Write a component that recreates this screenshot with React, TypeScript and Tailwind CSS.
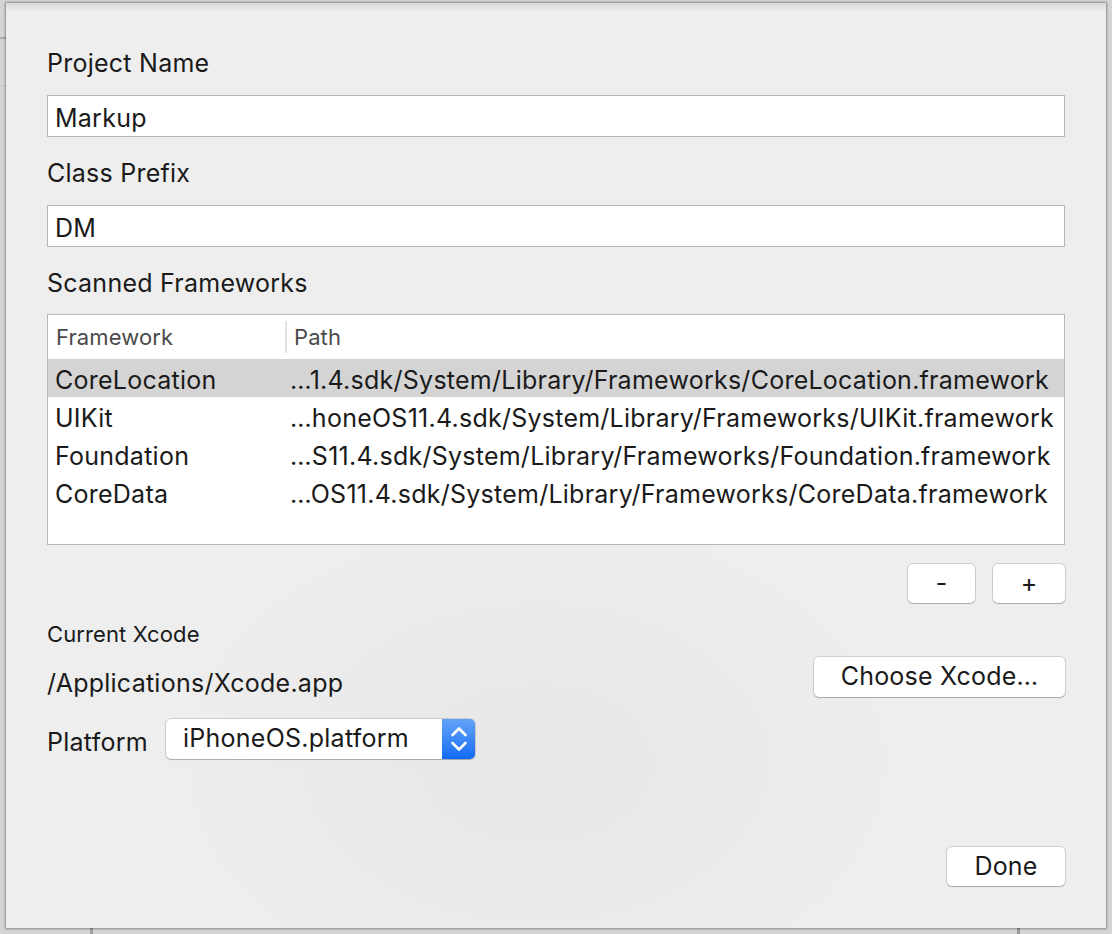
import React from 'react';

type Row = { name: string; path: string };

const rows: Row[] = [
  { name: 'CoreLocation', path: '…1.4.sdk/System/Library/Frameworks/CoreLocation.framework' },
  { name: 'UIKit', path: '…honeOS11.4.sdk/System/Library/Frameworks/UIKit.framework' },
  { name: 'Foundation', path: '…S11.4.sdk/System/Library/Frameworks/Foundation.framework' },
  { name: 'CoreData', path: '…OS11.4.sdk/System/Library/Frameworks/CoreData.framework' },
];

const font = { fontFamily: 'Inter, "Liberation Sans", sans-serif' };

function MacButton({ label, className }: { label: string; className: string }) {
  return (
    <button
      className={
        'bg-white rounded-[5px] text-[25px] tracking-[0.2px] text-[#1a1a1a] shadow-[0_0_0_1px_rgba(0,0,0,0.13),0_1px_1px_rgba(0,0,0,0.18)] flex items-center justify-center ' +
        className
      }
    >
      {label}
    </button>
  );
}

export default function App() {
  return (
    <div style={font} className="relative w-[1112px] h-[934px] bg-[#d5d5d5] overflow-hidden">
      {/* window chrome behind the sheet */}
      <div className="absolute left-0 top-[37px] w-[6px] h-[2px] bg-[#a9a9a9]" />
      <div className="absolute left-0 top-[85px] w-[6px] h-px bg-[#c4c4c4]" />
      <div className="absolute left-[90px] bottom-0 w-[3px] h-[8px] bg-[#9e9e9e]" />
      <div className="absolute left-[1017px] bottom-0 w-[3px] h-[8px] bg-[#9a9a9a]" />

      <div className="relative ml-[6px] mt-[3px] w-[1100px] h-[925px] bg-[#eeeeee] bg-[radial-gradient(ellipse_380px_260px_at_530px_760px,#e7e7e7,#eeeeee)] shadow-[0_0_2px_1px_rgba(0,0,0,0.35)] flex flex-col px-[41px] text-[#1a1a1a] tracking-[0.25px]">
        <div className="absolute left-0 top-0 w-full h-[9px] bg-gradient-to-b from-[#dadada] to-[#eeeeee]" />

        <div className="mt-[46px] text-[25px] leading-[28px]">Project Name</div>
        <div className="mt-[18px] h-[42px] bg-white border border-[#b6b6b6] flex items-center px-[7px] pt-[5px] text-[25px]">
          Markup
        </div>

        <div className="mt-[22px] text-[25px] leading-[28px]">Class Prefix</div>
        <div className="mt-[18px] h-[42px] bg-white border border-[#b6b6b6] flex items-center px-[7px] pt-[5px] text-[25px]">
          DM
        </div>

        <div className="mt-[22px] text-[25px] leading-[28px]">Scanned Frameworks</div>

        <div className="mt-[17px] h-[231px] bg-white border border-[#b9b9b9] flex flex-col">
          <div className="h-[44px] flex items-center text-[22px] text-[#4a4a4a] shrink-0 tracking-[0.1px]">
            <div className="w-[237px] pl-[8px]">Framework</div>
            <div className="w-[2px] h-[32px] bg-[#e3e3e3]" />
            <div className="pl-[7px]">Path</div>
          </div>
          {rows.map((r, i) => (
            <div
              key={r.name}
              className={
                'h-[38px] flex items-center text-[25px] pt-[5px] shrink-0 ' + (i === 0 ? 'bg-[#d4d4d4]' : '')
              }
            >
              <div className="w-[242px] pl-[7px]">{r.name}</div>
              <div className="whitespace-nowrap">{r.path}</div>
            </div>
          ))}
        </div>

        <div className="mt-[19px] flex justify-end gap-[18px]">
          <MacButton label="-" className="w-[67px] h-[39px]" />
          <MacButton label="+" className="w-[72px] h-[39px]" />
        </div>

        <div className="mt-[19px] text-[22px] leading-[24px] tracking-[0.1px]">Current Xcode</div>

        <div className="mt-[11px] flex justify-between items-start">
          <div className="mt-[12px] text-[25px] leading-[28px]">/Applications/Xcode.app</div>
          <MacButton label="Choose Xcode…" className="w-[251px] h-[40px]" />
        </div>

        <div className="mt-[22px] flex items-start">
          <div className="mt-[9px] text-[25px] leading-[28px] w-[119px]">Platform</div>
          <div className="w-[309px] h-[40px] bg-white rounded-[5px] shadow-[0_0_0_1px_rgba(0,0,0,0.13),0_1px_1px_rgba(0,0,0,0.18)] flex overflow-hidden">
            <div className="flex-1 flex items-center pl-[17px] text-[25px]">iPhoneOS.platform</div>
            <div className="w-[33px] h-full bg-gradient-to-b from-[#62a3f8] to-[#0f6bf5] flex items-center justify-center">
              <svg width="18" height="28" viewBox="0 0 18 28" fill="none" stroke="white" strokeWidth="2.6" strokeLinecap="round" strokeLinejoin="round">
                <path d="M2.5 10 L9 3.5 L15.5 10" />
                <path d="M2.5 18 L9 24.5 L15.5 18" />
              </svg>
            </div>
          </div>
        </div>

        <div className="mt-[88px] flex justify-end">
          <MacButton label="Done" className="w-[118px] h-[39px]" />
        </div>
      </div>
    </div>
  );
}
